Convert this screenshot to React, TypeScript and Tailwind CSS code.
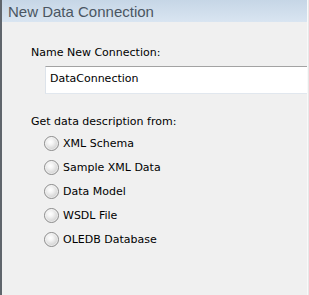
import React from "react";

const options = ["XML Schema", "Sample XML Data", "Data Model", "WSDL File", "OLEDB Database"];

function Radio() {
  return (
    <span className="relative block h-[15px] w-[15px] shrink-0 rounded-full border border-[#8a8a8a] bg-[radial-gradient(circle_at_42%_38%,#ffffff_0%,#f4f4f4_25%,#d6d6d6_65%,#bdbdbd_100%)]">
      <span className="absolute inset-0 rounded-full border border-white/50" />
    </span>
  );
}

export default function App() {
  return (
    <div className="relative h-[295px] w-[309px] overflow-hidden bg-[#f0f0f0] font-['DejaVu_Sans',sans-serif] text-[11px] text-black">
      <div className="flex h-full">
        <div className="w-[2px] shrink-0 bg-[#5f656c]" />
        <div className="flex min-w-0 flex-1 flex-col">
          <div className="flex h-[22px] items-center bg-gradient-to-b from-[#c6d6e6] to-[#d9e5f1] pl-[6px] pt-[1px] font-['Liberation_Sans',sans-serif] text-[15px] leading-none text-[#4a5662]">
            New Data Connection
          </div>
          <div className="flex flex-1 flex-col pl-[29px] pt-[24px]">
            <div className="leading-[13px]">Name New Connection:</div>
            <div className="ml-[14px] mt-[7px] flex h-[28px] w-[300px] items-center border border-t-[#a3a3a3] border-b-[#e1e7ee] border-l-[#dde3ea] border-r-[#dde3ea] bg-white pl-[4px] pb-[1px]">
              DataConnection
            </div>
            <div className="mt-[21px] leading-[13px]">Get data description from:</div>
            <div className="ml-[13px] mt-[8px] flex flex-col gap-[9px]">
              {options.map((o) => (
                <div key={o} className="flex h-[15px] items-center gap-[4px] leading-[13px]">
                  <Radio />
                  <span>{o}</span>
                </div>
              ))}
            </div>
          </div>
        </div>
        <div className="w-[1px] shrink-0 bg-[#f9f9f9]" />
        <div className="w-[1px] shrink-0 bg-[#e6e6e6]" />
      </div>
    </div>
  );
}
